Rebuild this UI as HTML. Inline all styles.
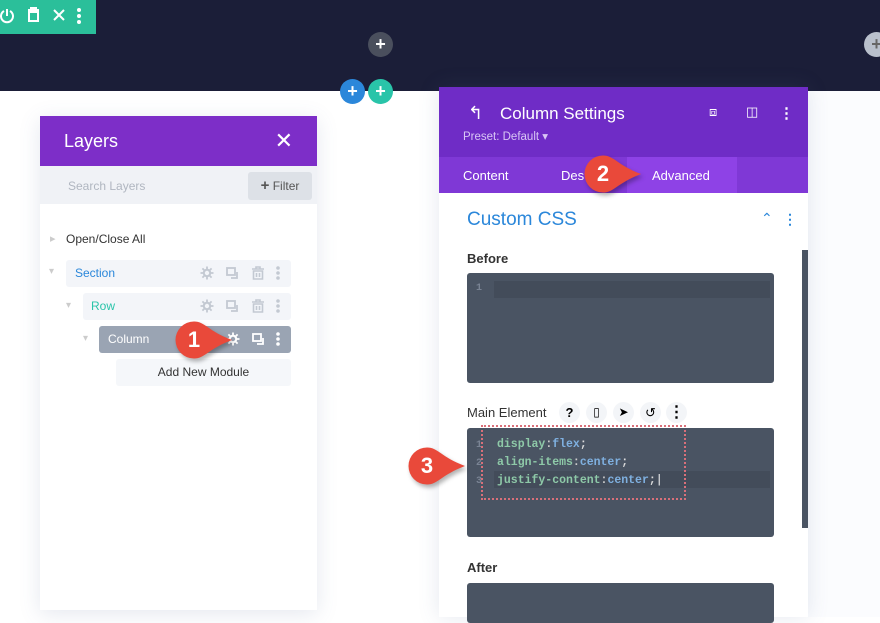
<!DOCTYPE html>
<html><head><meta charset="utf-8"><style>
*{box-sizing:border-box;margin:0;padding:0}
body{width:880px;height:617px;overflow:hidden;background:#fff;font-family:"Liberation Sans",sans-serif;position:relative}
.abs{position:absolute}
.circ{position:absolute;border-radius:50%;color:#fff;font-size:18px;line-height:24px;text-align:center;font-weight:bold}
.row{position:absolute;height:27px;background:#f3f5f9;border-radius:3px;font-size:12px;line-height:27px}
.code{position:absolute;left:467px;width:307px;background:#4a5463;border-radius:3px}
.mono{font-family:"Liberation Mono",monospace;font-size:11.5px;font-weight:bold}
.bub{position:absolute;color:#fff;font-size:22px;font-weight:bold;width:60px;height:40px}
.bub span{position:absolute;left:0;top:0;width:38px;line-height:38px;text-align:center}
</style></head><body>
<div class="abs" style="left:0;top:0;width:880px;height:91px;background:#1b1e38"></div>
<div class="abs" style="left:0;top:0;width:96px;height:34px;background:#2bbf9a;color:#fff">
<svg width="96" height="34" viewBox="0 0 96 34" fill="none" stroke="#fff" stroke-width="2"><path d="M4 11a6 6 0 1 0 6 0"/><path d="M7 9v7"/><path d="M28 10h11M31 10v-2h5v2M29 12h9v9h-9z"/><path d="M54 10l10 10M64 10l-10 10"/><circle cx="79" cy="10" r="1" fill="#fff"/><circle cx="79" cy="16" r="1" fill="#fff"/><circle cx="79" cy="22" r="1" fill="#fff"/></svg></div>
<div class="circ" style="left:368px;top:32px;width:25px;height:25px;background:#4a4f5d">+</div>
<div class="circ" style="left:864px;top:32px;width:25px;height:25px;background:#b9c0cc;color:#666">+</div>
<div class="circ" style="left:340px;top:79px;width:25px;height:25px;background:#2b87da">+</div>
<div class="circ" style="left:368px;top:79px;width:25px;height:25px;background:#29c4a9">+</div>

<svg width="0" height="0" style="position:absolute"><defs>
<g id="gear"><circle cx="7" cy="7" r="3.2" fill="none" stroke-width="2"/><path d="M7 0.5v3M7 10.5v3M0.5 7h3M10.5 7h3M2.4 2.4l2.1 2.1M9.5 9.5l2.1 2.1M2.4 11.6l2.1-2.1M9.5 4.5l2.1-2.1" stroke-width="1.8"/></g>
<g id="dup"><rect x="1" y="1" width="8" height="7" fill="none" stroke-width="1.8"/><path d="M11 5v6H5" fill="none" stroke-width="1.8"/></g>
<g id="trash"><path d="M1 3h12M5 3V1h4v2M2.5 5h9v8h-9zM5.5 7v4M8.5 7v4" fill="none" stroke-width="1.6"/></g>
<g id="dots"><circle cx="2" cy="2" r="1.3"/><circle cx="2" cy="7" r="1.3"/><circle cx="2" cy="12" r="1.3"/></g>
<g id="drop"><path d="M19 0.5C30 0.5 33 10 57 19C33 28 30 37.5 19 37.5A18.5 18.5 0 0 1 19 0.5Z" fill="#e9493a"/></g>
</defs></svg>

<!-- Layers -->
<div class="abs" style="left:40px;top:116px;width:277px;height:494px;background:#fff;box-shadow:0 4px 20px rgba(80,100,150,.15)"></div>
<div class="abs" style="left:40px;top:116px;width:277px;height:50px;background:#7d2ec8;color:#fff;font-size:18px;line-height:50px;padding-left:24px">Layers<span style="position:absolute;right:24px;font-size:22px">✕</span></div>
<div class="abs" style="left:40px;top:166px;width:277px;height:38px;background:#f0f2f6;color:#b0b6c0;font-size:12px;line-height:40px;padding-left:28px">Search Layers</div>
<div class="abs" style="left:248px;top:172px;width:64px;height:28px;background:#dde1e7;border-radius:3px;color:#555;font-size:12px;line-height:28px;text-align:center"><b style="font-size:15px">+</b> Filter</div>
<div class="abs" style="left:50px;top:232px;font-size:11px;color:#ccc">▸</div>
<div class="abs" style="left:66px;top:232px;font-size:12px;color:#333">Open/Close All</div>
<div class="abs" style="left:49px;top:266px;font-size:10px;color:#ccc">▾</div>
<div class="row" style="left:66px;top:260px;width:225px;color:#2b87da;padding-left:9px">Section</div>
<div class="abs" style="left:66px;top:300px;font-size:10px;color:#ccc">▾</div>
<div class="row" style="left:83px;top:293px;width:208px;color:#29c4a9;padding-left:8px">Row</div>
<div class="abs" style="left:83px;top:333px;font-size:10px;color:#ccc">▾</div>
<div class="row" style="left:99px;top:326px;width:192px;background:#9aa4b3;color:#fff;padding-left:9px">Column</div>
<svg class="abs" style="left:0;top:0" width="320" height="360">
<g stroke="#c3c9d2" fill="#c3c9d2">
<use href="#gear" x="200" y="266"/><use href="#dup" x="226" y="267"/><use href="#trash" x="251" y="266"/><use href="#dots" x="276" y="266"/>
<use href="#gear" x="200" y="299"/><use href="#dup" x="226" y="300"/><use href="#trash" x="251" y="299"/><use href="#dots" x="276" y="299"/>
</g>
<g stroke="#fff" fill="#fff"><use href="#gear" x="226" y="332"/><use href="#dup" x="252" y="333"/><use href="#dots" x="276" y="332"/></g>
</svg>
<div class="row" style="left:116px;top:359px;width:175px;color:#333;text-align:center;background:#f5f7fa">Add New Module</div>
<div class="bub" style="left:175px;top:321px"><svg width="60" height="40" style="position:absolute;left:0;top:0;filter:drop-shadow(2px 3px 2px rgba(0,0,0,.3))"><use href="#drop"/></svg><span>1</span></div>

<!-- Settings -->
<div class="abs" style="left:808px;top:91px;width:72px;height:526px;background:#fbfcfe"></div>
<div class="abs" style="left:439px;top:87px;width:369px;height:530px;background:#fff;box-shadow:0 0 20px rgba(80,100,150,.15)"></div>
<div class="abs" style="left:439px;top:87px;width:369px;height:70px;background:#6f2cc6;color:#fff">
<div style="position:absolute;left:29px;top:16px;font-size:18px">↰</div>
<div style="position:absolute;left:61px;top:17px;font-size:17px">Column Settings</div>
<div style="position:absolute;left:24px;top:42px;font-size:11.5px;color:#d9c6f5">Preset: Default ▾</div>
<div style="position:absolute;left:270px;top:17px;font-size:13px">⧈</div>
<div style="position:absolute;left:307px;top:17px;font-size:13px">◫</div>
<div style="position:absolute;left:340px;top:17px;font-size:15px;font-weight:bold">⋮</div></div>
<div class="abs" style="left:439px;top:157px;width:369px;height:36px;background:#7f38d6"></div>
<div class="abs" style="left:627px;top:157px;width:110px;height:36px;background:#8e42e6"></div>
<div class="abs" style="left:463px;top:168px;color:#fff;font-size:13px">Content</div>
<div class="abs" style="left:561px;top:168px;color:#fff;font-size:13px">Des</div>
<div class="abs" style="left:652px;top:168px;color:#fff;font-size:13px">Advanced</div>
<div class="bub" style="left:584px;top:155px"><svg width="60" height="40" style="position:absolute;left:0;top:0;filter:drop-shadow(2px 3px 2px rgba(0,0,0,.3))"><use href="#drop"/></svg><span>2</span></div>
<div class="abs" style="left:467px;top:209px;color:#2b87da;font-size:19px">Custom CSS</div>
<div class="abs" style="left:761px;top:210px;color:#2b87da;font-size:14px">⌃</div>
<div class="abs" style="left:783px;top:211px;color:#2b87da;font-size:14px;font-weight:bold">⋮</div>
<div class="abs" style="left:802px;top:250px;width:6px;height:278px;background:#4a5463"></div>
<div class="abs" style="left:467px;top:251px;color:#333;font-size:13px;font-weight:600">Before</div>
<div class="code" style="top:273px;height:110px"><div class="abs" style="left:27px;top:8px;width:276px;height:17px;background:#434c5a"></div><div class="abs mono" style="left:9px;top:10px;color:#7a8494;font-size:10px">1</div></div>
<div class="abs" style="left:467px;top:405px;color:#333;font-size:13px">Main Element</div>
<div class="abs" style="left:559px;top:402px;width:21px;height:21px;border-radius:50%;background:#f3f5f8;text-align:center;line-height:21px;font-weight:bold;font-size:13px">?</div>
<div class="abs" style="left:586px;top:402px;width:21px;height:21px;border-radius:50%;background:#f3f5f8;text-align:center;line-height:21px;font-size:12px">▯</div>
<div class="abs" style="left:613px;top:402px;width:21px;height:21px;border-radius:50%;background:#f3f5f8;text-align:center;line-height:21px;font-size:12px">➤</div>
<div class="abs" style="left:640px;top:402px;width:21px;height:21px;border-radius:50%;background:#f3f5f8;text-align:center;line-height:21px;font-size:13px">↺</div>
<div class="abs" style="left:666px;top:402px;width:21px;height:21px;border-radius:50%;background:#f3f5f8;text-align:center;line-height:21px;font-weight:bold">⋮</div>
<div class="code" style="top:428px;height:109px">
<div class="abs" style="left:27px;top:43px;width:276px;height:17px;background:#434c5a"></div>
<div class="abs mono" style="left:9px;top:9px;color:#7a8494;font-size:10px;line-height:18px">1<br>2<br>3</div>
<div class="abs mono" style="left:30px;top:8px;line-height:18px;color:#8ec9a8">display<span style="color:#ccc">:</span><span style="color:#7fb0e0">flex</span><span style="color:#ddd">;</span><br>align-items<span style="color:#ccc">:</span><span style="color:#7fb0e0">center</span><span style="color:#ddd">;</span><br>justify-content<span style="color:#ccc">:</span><span style="color:#7fb0e0">center</span><span style="color:#ddd">;</span><span style="color:#fff;font-weight:normal">|</span></div></div>
<div class="abs" style="left:481px;top:425px;width:205px;height:75px;border:2px dotted #d9707a"></div>
<div class="bub" style="left:408px;top:447px"><svg width="60" height="40" style="position:absolute;left:0;top:0;filter:drop-shadow(2px 3px 2px rgba(0,0,0,.3))"><use href="#drop"/></svg><span>3</span></div>
<div class="abs" style="left:467px;top:560px;color:#333;font-size:13px;font-weight:600">After</div>
<div class="code" style="top:583px;height:40px"></div>
</body></html>
